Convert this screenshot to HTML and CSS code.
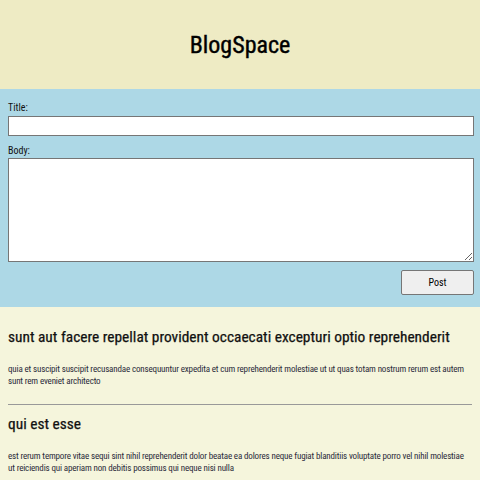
FILE: index.html
```html
<!DOCTYPE html>
<html>
<head>
<meta charset="utf-8">
<link rel="stylesheet" href="styles.css">
</head>
<body>
<header class="site-header">
  <h1 class="site-title">BlogSpace</h1>
</header>
<form class="post-form">
  <label class="field-label" for="title">Title:</label>
  <input class="field-input" id="title" type="text">
  <label class="field-label" for="body">Body:</label>
  <textarea class="field-textarea" id="body"></textarea>
  <div class="form-actions">
    <button class="post-btn" type="button">Post</button>
  </div>
</form>
<main class="posts">
  <article class="post post-first">
    <h2 class="post-title">sunt aut facere repellat provident occaecati excepturi optio reprehenderit</h2>
    <p class="post-body">quia et suscipit suscipit recusandae consequuntur expedita et cum reprehenderit molestiae ut ut quas totam nostrum rerum est autem sunt rem eveniet architecto</p>
  </article>
  <hr class="divider">
  <article class="post">
    <h2 class="post-title">qui est esse</h2>
    <p class="post-body">est rerum tempore vitae sequi sint nihil reprehenderit dolor beatae ea dolores neque fugiat blanditiis voluptate porro vel nihil molestiae ut reiciendis qui aperiam non debitis possimus qui neque nisi nulla</p>
  </article>
</main>
</body>
</html>
```
FILE: styles.css
```css
html, body {
  margin: 0;
  padding: 0;
}
body {
  font-family: "Roboto Condensed", Roboto, sans-serif;
  font-stretch: condensed;
  background: #f5f5dc;
  color: #111;
}
.site-header {
  background: #eeebc4;
  height: 89px;
  display: flex;
  align-items: center;
  justify-content: center;
}
.site-title {
  margin: 0;
  font-size: 24px;
  font-weight: normal;
  -webkit-text-stroke: 0.4px #000;
  color: #000;
}
.post-form {
  background: #add8e6;
  padding: 13px 6px 12px 8px;
  display: flex;
  flex-direction: column;
}
.field-label {
  font-size: 10px;
  line-height: 12px;
  color: #111;
  margin-bottom: 2px;
}
.field-input {
  height: 20px;
  box-sizing: border-box;
  border: 1px solid #767676;
  margin: 0 0 9px 0;
  padding: 0;
  background: #fff;
}
.field-textarea {
  height: 104px;
  box-sizing: border-box;
  border: 1px solid #767676;
  margin: -1px 0 0 0;
  padding: 0;
  resize: vertical;
  background: #fff;
}
.form-actions {
  display: flex;
  justify-content: flex-end;
  margin-top: 8px;
}
.post-btn {
  width: 73px;
  height: 25px;
  font-family: inherit;
  font-size: 10px;
  background: #efefef;
  border: 1px solid #767676;
  border-radius: 2px;
  color: #000;
}
.posts {
  padding: 0 8px;
}
.post {
  display: flex;
  flex-direction: column;
}
.post-title {
  font-size: 15.4px;
  line-height: 19px;
  font-weight: normal;
  -webkit-text-stroke: 0.25px #111;
  margin: 10px 0 16px 0;
  color: #111;
}
.post-first .post-title {
  margin-top: 21px;
}
.post-body {
  font-size: 9px;
  line-height: 12px;
  letter-spacing: -0.15px;
  margin: 0 0 17px 0;
  color: #2a2a3a;
}
.divider {
  border: 0;
  border-top: 1px solid #999;
  margin: 0;
}
```
